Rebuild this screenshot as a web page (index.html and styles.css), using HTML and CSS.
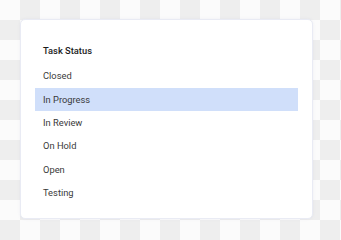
FILE: index.html
```html
<!DOCTYPE html>
<html lang="en">
<head>
    <meta charset="UTF-8">
    <meta name="viewport" content="width=device-width, initial-scale=1.0">
    <title>Task Status</title>
    <link rel="stylesheet" href="styles.css">
</head>
<body>
    <div class="status-card">
        <h3 class="status-title">Task Status</h3>
        <ul class="status-list">
            <li>Closed</li>
            <li class="selected">In Progress</li>
            <li>In Review</li>
            <li>On Hold</li>
            <li>Open</li>
            <li>Testing</li>
        </ul>
    </div>
</body>
</html>
```

FILE: styles.css
```css
body {
    font-family: Roboto, "Liberation Sans", Arial, sans-serif;
    margin: 0;
    padding: 19px 0 0 20px;
    width: 341px;
    height: 240px;
    box-sizing: border-box;
    overflow: hidden;
    background: repeating-conic-gradient(#eeeeee 0 25%, #fbfbfb 0 50%) 0 0 / 40px 40px;
}
.status-card {
    width: 293px;
    height: 200px;
    box-sizing: border-box;
    padding: 14px;
    background-color: white;
    border: 1px solid #e9ebf4;
    border-radius: 5px;
    box-shadow: 0 0 3px rgba(120, 130, 180, 0.1);
}
.status-title {
    margin: -1px 0 0;
    padding: 6px 8px 2px;
    font-size: 9.33px;
    font-weight: 500;
    line-height: 23.33px;
    color: #1c1c1c;
}
.status-list {
    list-style-type: none;
    margin: 0;
    padding: 0;
}
.status-list li {
    height: 23.33px;
    line-height: 23.33px;
    padding: 0 8px;
    font-size: 9.33px;
    color: #3a3a3a;
}
.status-list li.selected {
    background-color: #d0dffa;
}
```
